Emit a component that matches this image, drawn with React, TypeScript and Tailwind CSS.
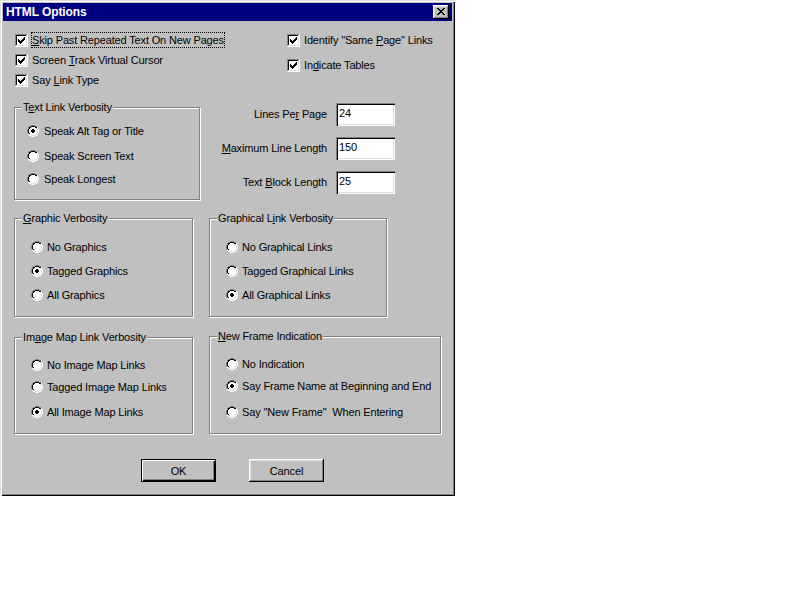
import React from 'react';

// pixel palette for the little win95 bitmaps
const PAL: Record<string, string> = {
  g: '#808080',
  k: '#000000',
  w: '#ffffff',
  l: '#dfdfdf',
};

function Pix({ rows }: { rows: string[] }) {
  const w = rows[0].length;
  const h = rows.length;
  return (
    <svg width={w} height={h} viewBox={`0 0 ${w} ${h}`} shapeRendering="crispEdges" className="shrink-0 block">
      {rows.flatMap((r, y) =>
        r.split('').map((c, x) =>
          c === '.' ? null : <rect key={`${x}-${y}`} x={x} y={y} width={1} height={1} fill={PAL[c]} />
        )
      )}
    </svg>
  );
}

const overlay = (base: string[], mark: string[], ox: number, oy: number) =>
  base.map((row, y) => {
    const m = mark[y - oy];
    if (!m) return row;
    return row
      .split('')
      .map((c, x) => {
        const mc = m[x - ox];
        return mc && mc !== '.' ? mc : c;
      })
      .join('');
  });

const BOX = [
  'ggggggggggggw',
  'gkkkkkkkkkklw',
  ...Array(9).fill('gkwwwwwwwwwlw'),
  'glllllllllllw',
  'wwwwwwwwwwwww',
];

const CHECK = ['......k', '.....kk', 'k...kkk', 'kk.kkk.', 'kkkkk..', '.kkk...', '..k....'];
const CHECKED_BOX = overlay(BOX, CHECK, 3, 3);

const RADIO = [
  '....gggg....',
  '..ggkkkkgg..',
  '.gkkwwwwkkw.',
  '.gkwwwwwwlw.',
  'gkwwwwwwwwlw',
  'gkwwwwwwwwlw',
  'gkwwwwwwwwlw',
  'gkwwwwwwwwlw',
  '.gkwwwwwwlw.',
  '.wllwwwwllw.',
  '..wwllllww..',
  '....wwww....',
];
const DOT = ['.kk.', 'kkkk', 'kkkk', '.kk.'];
const RADIO_ON = overlay(RADIO, DOT, 4, 4);

const CLOSE_X = ['kk....kk', '.kk..kk.', '..kkkk..', '...kk...', '..kkkk..', '.kk..kk.', 'kk....kk'];

// "&" marks the accelerator letter
function Acc({ text }: { text: string }) {
  const i = text.indexOf('&');
  if (i < 0) return <>{text}</>;
  return (
    <>
      {text.slice(0, i)}
      <u className="underline-offset-[1px]">{text[i + 1]}</u>
      {text.slice(i + 2)}
    </>
  );
}

function Check({ label, focused }: { label: string; focused?: boolean }) {
  return (
    <div className="flex items-center gap-[3px] h-5">
      <Pix rows={CHECKED_BOX} />
      <span
        className={
          focused
            ? 'border border-dotted border-black leading-[14px] whitespace-nowrap'
            : 'border border-transparent leading-[14px] whitespace-nowrap'
        }
      >
        <Acc text={label} />
      </span>
    </div>
  );
}

interface Opt {
  label: string;
  on?: boolean;
  mt: string;
}

function Group({
  title,
  opts,
  box,
  pad,
  gap,
}: {
  title: string;
  opts: Opt[];
  box: string;
  pad: string;
  gap: string;
}) {
  return (
    <div className={`relative border border-[#808080] shadow-[inset_1px_1px_0_#fff,1px_1px_0_#fff] flex flex-col ${box} ${pad}`}>
      <span className="absolute top-[-7px] left-[7px] px-[1px] bg-[#c0c0c0] leading-[13px] whitespace-nowrap">
        <Acc text={title} />
      </span>
      {opts.map((o) => (
        <div key={o.label} className={`flex items-center h-4 ${gap} ${o.mt}`}>
          <Pix rows={o.on ? RADIO_ON : RADIO} />
          <span className="whitespace-pre leading-[14px]">{o.label}</span>
        </div>
      ))}
    </div>
  );
}

function Field({ label, value }: { label: string; value: string }) {
  return (
    <div className="flex items-center justify-end gap-[9px] h-[23px]">
      <span className="whitespace-nowrap">
        <Acc text={label} />
      </span>
      <div className="w-[59px] h-[23px] bg-white pl-[3px] pt-[3px] leading-[14px] shadow-[inset_1px_1px_0_#808080,inset_2px_2px_0_#000,inset_-1px_-1px_0_#fff,inset_-2px_-2px_0_#dfdfdf]">
        {value}
      </div>
    </div>
  );
}

export default function App() {
  return (
    <div className="w-[800px] h-[600px] bg-white font-['Liberation_Sans',Arial,sans-serif] text-[11px] tracking-[-0.15px] text-black">
      <div className="w-[455px] h-[496px] bg-[#c0c0c0] flex flex-col shadow-[inset_1px_1px_0_#dfdfdf,inset_2px_2px_0_#fff,inset_-1px_-1px_0_#000,inset_-2px_-2px_0_#808080]">
        {/* title bar */}
        <div className="mx-[3px] mt-[3px] h-[18px] bg-[#000080] flex items-center justify-between pl-[3px] pr-[3px]">
          <span className="text-white font-bold text-[12px] tracking-[-0.1px] leading-[14px]">HTML Options</span>
          <button className="w-4 h-[14px] bg-[#c0c0c0] flex items-center justify-center pb-[1px] shadow-[inset_-1px_-1px_0_#000,inset_1px_1px_0_#fff,inset_-2px_-2px_0_#808080,inset_2px_2px_0_#dfdfdf]">
            <Pix rows={CLOSE_X} />
          </button>
        </div>

        {/* checkboxes */}
        <div className="mt-[9px] h-[60px] flex">
          <div className="ml-[15px] w-[272px] flex flex-col">
            <Check label="&Skip Past Repeated Text On New Pages" focused />
            <Check label="Screen &Track Virtual Cursor" />
            <Check label="Say &Link Type" />
          </div>
          <div className="flex flex-col gap-[5px]">
            <Check label={'Identify "Same &Page" Links'} />
            <Check label="In&dicate Tables" />
          </div>
        </div>

        {/* text link verbosity + fields */}
        <div className="mt-[13px] flex items-start">
          <Group
            title="T&ext Link Verbosity"
            box="mt-[4px] ml-[14px] w-[186px] h-[93px]"
            pad="pl-[12px]"
            gap="gap-[5px]"
            opts={[
              { label: 'Speak Alt Tag or Title', on: true, mt: 'mt-[15px]' },
              { label: 'Speak Screen Text', mt: 'mt-[9px]' },
              { label: 'Speak Longest', mt: 'mt-[7px]' },
            ]}
          />
          <div className="w-[195px] flex flex-col gap-[11px]">
            <Field label="Lines Pe&r Page" value="24" />
            <Field label="&Maximum Line Length" value="150" />
            <Field label="Text &Block Length" value="25" />
          </div>
        </div>

        {/* graphics */}
        <div className="mt-[18px] flex items-start">
          <Group
            title="&Graphic Verbosity"
            box="ml-[14px] w-[179px] h-[99px]"
            pad="pl-[16px]"
            gap="gap-[4px]"
            opts={[
              { label: 'No Graphics', mt: 'mt-[20px]' },
              { label: 'Tagged Graphics', on: true, mt: 'mt-[8px]' },
              { label: 'All Graphics', mt: 'mt-[8px]' },
            ]}
          />
          <Group
            title="Graphical L&ink Verbosity"
            box="ml-[16px] w-[178px] h-[99px]"
            pad="pl-[16px]"
            gap="gap-[4px]"
            opts={[
              { label: 'No Graphical Links', mt: 'mt-[20px]' },
              { label: 'Tagged Graphical Links', mt: 'mt-[8px]' },
              { label: 'All Graphical Links', on: true, mt: 'mt-[8px]' },
            ]}
          />
        </div>

        {/* image maps + frames */}
        <div className="mt-[19px] flex items-start">
          <Group
            title="Im&age Map Link Verbosity"
            box="mt-[1px] ml-[14px] w-[179px] h-[97px]"
            pad="pl-[16px]"
            gap="gap-[4px]"
            opts={[
              { label: 'No Image Map Links', mt: 'mt-[19px]' },
              { label: 'Tagged Image Map Links', mt: 'mt-[6px]' },
              { label: 'All Image Map Links', on: true, mt: 'mt-[9px]' },
            ]}
          />
          <Group
            title="&New Frame Indication"
            box="ml-[16px] w-[232px] h-[98px]"
            pad="pl-[16px]"
            gap="gap-[4px]"
            opts={[
              { label: 'No Indication', mt: 'mt-[19px]' },
              { label: 'Say Frame Name at Beginning and End', on: true, mt: 'mt-[6px]' },
              { label: 'Say "New Frame"  When Entering', mt: 'mt-[10px]' },
            ]}
          />
        </div>

        {/* buttons */}
        <div className="mt-[25px] ml-[141px] flex gap-[33px]">
          <button className="w-[75px] h-[23px] bg-[#c0c0c0] border border-black shadow-[inset_1px_1px_0_#fff,inset_-1px_-1px_0_#000,inset_-2px_-2px_0_#808080] leading-[14px]">
            OK
          </button>
          <button className="w-[75px] h-[23px] bg-[#c0c0c0] shadow-[inset_-1px_-1px_0_#000,inset_1px_1px_0_#fff,inset_-2px_-2px_0_#808080,inset_2px_2px_0_#dfdfdf] leading-[14px]">
            Cancel
          </button>
        </div>
      </div>
    </div>
  );
}
